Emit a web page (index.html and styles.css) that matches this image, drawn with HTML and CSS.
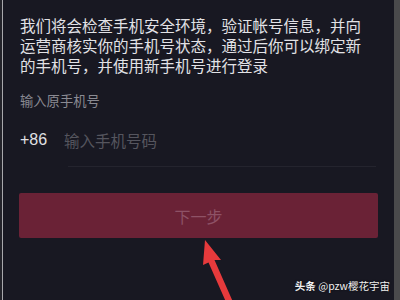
FILE: index.html
```html
<!DOCTYPE html>
<html lang="zh-CN">
<head>
<meta charset="utf-8">
<link rel="stylesheet" href="styles.css">
</head>
<body>
<div class="frame">
  <div class="edge-dark"></div>
  <div class="edge-line"></div>
  <div class="main">
    <p class="desc">我们将会检查手机安全环境，验证帐号信息，并向运营商核实你的手机号状态，通过后你可以绑定新的手机号，并使用新手机号进行登录</p>
    <div class="label">输入原手机号</div>
    <div class="phone-row">
      <span class="code">+86</span>
      <div class="field"><span class="placeholder">输入手机号码</span></div>
    </div>
    <div class="btn">下一步</div>
  </div>
  <div class="edge-right"></div>
  <svg class="arrow" width="60" height="70" viewBox="0 0 60 70">
    <polygon points="15,8 31,28 24.5,28 43,70 36,70 18.5,30.5 13,33" fill="#e63a3c"/>
  </svg>
  <div class="watermark"><b>头条</b> @pzw樱花宇宙</div>
</div>
</body>
</html>
```
FILE: styles.css
```css
html, body {
  margin: 0;
  padding: 0;
  background: #181820;
}
.frame {
  position: relative;
  width: 400px;
  height: 300px;
  display: flex;
  overflow: hidden;
  font-family: "Noto Sans CJK SC", "Noto Sans", sans-serif;
}
.edge-dark {
  width: 2px;
  background: #23232a;
}
.edge-line {
  width: 1px;
  background: #a8a8ac;
}
.edge-right {
  width: 6px;
  background: #4a4a4c;
}
.main {
  flex: 1;
  background: #181822;
  padding: 15px 16px 0 17px;
}
.desc {
  margin: 0;
  max-width: 345px;
  font-size: 15.5px;
  line-height: 20px;
  color: #e2e2e6;
}
.label {
  margin-top: 17px;
  font-size: 13.3px;
  line-height: 18px;
  color: #8a8a92;
}
.phone-row {
  margin-top: 18px;
  display: flex;
  align-items: flex-start;
}
.code {
  width: 44px;
  font-size: 16px;
  line-height: 24px;
  color: #e0e0e4;
  font-family: "Liberation Sans", "Noto Sans", sans-serif;
}
.field {
  flex: 1;
  margin-left: 4px;
  margin-right: 2px;
  padding-bottom: 14px;
  border-bottom: 1px solid #24242e;
}
.placeholder {
  display: block;
  margin-left: -4px;
  font-size: 15.5px;
  line-height: 24px;
  color: #55555e;
}
.btn {
  margin-top: 26px;
  margin-left: -1px;
  height: 45px;
  background: #6a2236;
  border-radius: 2px;
  display: flex;
  align-items: center;
  justify-content: center;
  font-size: 16px;
  color: #8e5266;
}
.arrow {
  position: absolute;
  left: 190px;
  top: 232px;
}
.watermark {
  position: absolute;
  right: 10px;
  top: 278px;
  font-size: 10.5px;
  line-height: 16px;
  color: #f0f0f0;
  text-shadow: 0 0 2px rgba(0,0,0,0.6);
}
.watermark b {
  font-weight: 700;
}
```
